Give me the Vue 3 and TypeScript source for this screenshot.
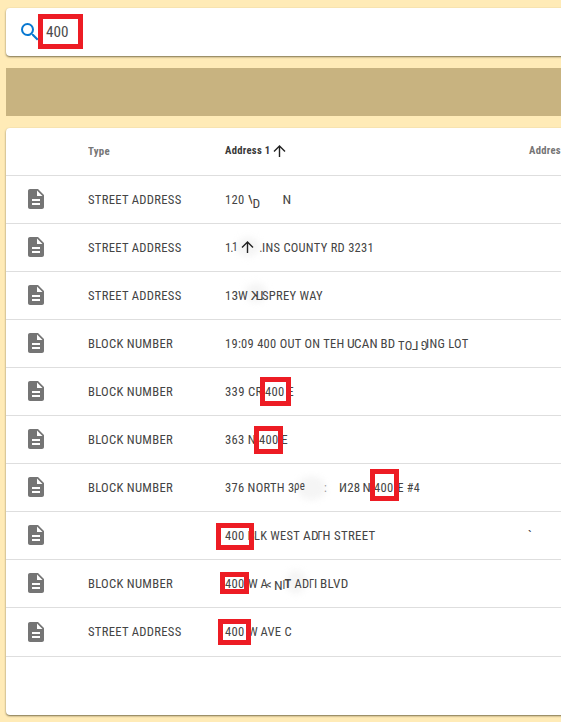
<script setup lang="ts">
interface Piece {
  t?: string
  x: number
  w: number
  dy?: number
  flip?: boolean
  turn?: boolean
  bold?: boolean
  faint?: boolean
  kind?: 'cover' | 'smudge' | 'arrow' | 'box'
  y?: number
  h?: number
}
interface Row {
  type: string
  width: number
  pieces: Piece[]
  note?: string
}

const street = { type: 'STREET ADDRESS', width: 93.5 }
const block = { type: 'BLOCK NUMBER', width: 85 }

const rows: Row[] = [
  { ...street, pieces: [
    { t: '120', x: 225, w: 19.5 }, { t: 'V', x: 248, w: 8.5 },
    { kind: 'cover', x: 252.2, w: 8, y: 12, h: 18 },
    { t: 'D', x: 252.5, w: 8, dy: 4 }, { t: 'N', x: 282.5, w: 9 },
  ] },
  { ...street, pieces: [
    { kind: 'smudge', x: 236, w: 24, y: 13, h: 20 },
    { t: '1', x: 225, w: 6.5 }, { t: '.', x: 230.5, w: 3 }, { t: '1', x: 232, w: 6, dy: -1 },
    { kind: 'arrow', x: 239.5, w: 16, y: 15 },
    { t: '.', x: 259.5, w: 3 }, { t: 'INS COUNTY RD 3231', x: 262, w: 112 },
  ] },
  { ...street, pieces: [
    { kind: 'smudge', x: 245, w: 22, y: 11, h: 20 },
    { t: '1', x: 225, w: 6.5 }, { t: '3', x: 231.5, w: 7 }, { t: 'W', x: 238, w: 10 },
    { t: 'K', x: 250.5, w: 8.5, flip: true }, { t: 'L', x: 257, w: 6.5, flip: true },
    { t: 'SPREY WAY', x: 262, w: 61 },
  ] },
  { ...block, pieces: [
    { t: '19:09 400 OUT ON TEH', x: 225, w: 119.5 }, { t: 'U', x: 347, w: 8 },
    { t: 'CAN', x: 354, w: 24 }, { t: 'BD', x: 380.5, w: 15 },
    { t: 'TO', x: 398, w: 14.5, dy: 2 }, { t: 'L', x: 411.5, w: 7, dy: 2, flip: true },
    { t: 'G', x: 420.5, w: 7, dy: 2, turn: true },
    { kind: 'cover', x: 420, w: 3, y: 14, h: 4 },
    { t: 'ING LOT', x: 426, w: 42.5 },
  ] },
  { ...block, pieces: [
    { t: '339 CR', x: 225, w: 37.5 }, { t: '400', x: 265, w: 19.5 }, { t: 'E', x: 287, w: 7 },
    { kind: 'box', x: 260, w: 31, y: 9, h: 29 },
  ] },
  { ...block, pieces: [
    { t: '363 N', x: 225, w: 31 }, { t: '400', x: 259, w: 19.5 }, { t: 'E', x: 281, w: 7 },
    { kind: 'box', x: 254, w: 29, y: 10, h: 28 },
  ] },
  { ...block, pieces: [
    { kind: 'smudge', x: 297, w: 29, y: 12, h: 24 },
    { t: '376 NORTH 3', x: 225, w: 69.5 }, { t: 'ρe', x: 294, w: 11, dy: -2 },
    { t: ':', x: 324, w: 3, faint: true },
    { t: 'И28', x: 339, w: 21.5 }, { t: 'N', x: 362.5, w: 8.5 },
    { t: '400', x: 374, w: 19.5 }, { t: 'E #4', x: 397.5, w: 22.5 },
    { kind: 'box', x: 370, w: 29, y: 5, h: 32 },
  ] },
  { type: '', width: 0, note: '`', pieces: [
    { t: '400', x: 225, w: 19.5 }, { t: 'B', x: 247.5, w: 7.5 },
    { t: 'LK WEST', x: 254, w: 46 }, { t: 'AD', x: 303, w: 16 }, { t: 'Γ', x: 317.5, w: 5.5 },
    { t: 'H STREET', x: 322.5, w: 53 },
    { kind: 'box', x: 216, w: 38, y: 11, h: 27 },
  ] },
  { ...block, pieces: [
    { kind: 'smudge', x: 286, w: 20, y: 10, h: 24 },
    { t: '400', x: 225, w: 19.5 }, { t: 'W', x: 248, w: 10 }, { t: 'A', x: 260.5, w: 7.5 },
    { t: '<', x: 266, w: 6, dy: 1 }, { t: 'N', x: 274, w: 9, dy: 2 }, { t: 'I', x: 282.5, w: 3, dy: 1 },
    { t: 'T', x: 284.5, w: 7, bold: true }, { t: 'AD', x: 294.5, w: 15 },
    { t: 'Γ', x: 309, w: 5.5 }, { t: 'I', x: 314, w: 3.5 }, { t: 'BLVD', x: 320, w: 28.5 },
    { kind: 'box', x: 220, w: 29, y: 12, h: 22 },
  ] },
  { ...street, pieces: [
    { t: '400', x: 225, w: 19.5 }, { t: 'W', x: 248, w: 10 }, { t: 'AVE C', x: 260.5, w: 31.5 },
    { kind: 'box', x: 218, w: 33, y: 11, h: 26 },
  ] },
]

function place(p: Piece): string {
  const y = 28 + (p.dy ?? 0)
  if (p.flip) return `translate(${p.x + p.w} ${y}) scale(-1 1)`
  if (p.turn) return `translate(${p.x + p.w} ${y - 9}) rotate(180)`
  return `translate(${p.x} ${y})`
}
</script>

<template>
  <div class="page">
    <div class="search">
      <svg class="glass" viewBox="0 0 24 24"><path d="M15.5 14h-.79l-.28-.27A6.47 6.47 0 0 0 16 9.5 6.5 6.5 0 1 0 9.5 16c1.61 0 3.09-.59 4.23-1.57l.27.28v.79l5 4.99L20.490 19l-4.990-5zm-6 0C7.010 14 5 11.990 5 9.500S7.010 5 9.500 5 14 7.010 14 9.500 11.990 14 9.500 14z" /></svg>
      <div class="query">
        <svg width="35" height="25"><text x="3" y="18" textLength="22.5" lengthAdjust="spacingAndGlyphs">400</text></svg>
      </div>
    </div>
    <div class="band"></div>
    <div class="card">
      <div class="row head">
        <span class="icon"></span>
        <svg class="type" width="112" height="47"><text x="0" y="27" textLength="22" lengthAdjust="spacingAndGlyphs">Type</text></svg>
        <svg class="address" viewBox="200 0 361 47" width="361" height="47">
          <text class="sorted" x="225" y="26" textLength="45.5" lengthAdjust="spacingAndGlyphs">Address 1</text>
          <path class="arrow" d="M279.500 29V18M274 23.500l5.500-5.500 5.500 5.500" />
          <text x="529" y="26" textLength="32" lengthAdjust="spacingAndGlyphs">Addres</text>
        </svg>
      </div>
      <div v-for="(row, i) in rows" :key="i" class="row">
        <span class="icon"><svg width="24" height="24" viewBox="0 0 24 24"><path d="M14 2H6c-1.100 0-1.990.9-1.990 2L4 20c0 1.100.89 2 1.990 2H18c1.100 0 2-.9 2-2V8l-6-6zm2 16H8v-2h8v2zm0-4H8v-2h8v2zm-3-5V3.500L18.500 9H13z" /></svg></span>
        <svg class="type" width="112" height="47"><text v-if="row.type" x="0" y="28" :textLength="row.width" lengthAdjust="spacingAndGlyphs">{{ row.type }}</text></svg>
        <svg class="address" viewBox="200 0 361 47" width="361" height="47">
          <template v-for="(p, j) in row.pieces" :key="j">
            <rect v-if="p.kind === 'cover'" class="cover" :x="p.x" :y="p.y" :width="p.w" :height="p.h" />
            <ellipse v-else-if="p.kind === 'smudge'" class="smudge" :cx="p.x + p.w / 2" :cy="p.y! + p.h! / 2" :rx="p.w / 2" :ry="p.h! / 2" />
            <path v-else-if="p.kind === 'arrow'" class="arrow" :transform="`translate(${p.x} ${p.y})`" d="M8 14V3M2.500 8.500L8 3l5.500 5.500" />
            <rect v-else-if="p.kind === 'box'" class="box" :x="p.x + 2.5" :y="p.y! + 2.5" :width="p.w - 5" :height="p.h! - 5" />
            <text v-else :class="{ bold: p.bold, faint: p.faint }" :transform="place(p)" :textLength="p.w" lengthAdjust="spacingAndGlyphs">{{ p.t }}</text>
          </template>
          <text v-if="row.note" x="528" y="28">{{ row.note }}</text>
        </svg>
      </div>
    </div>
  </div>
</template>

<style>
body { margin: 0; background: #ffebb7; overflow: hidden; }
</style>

<style scoped>
.page {
  box-sizing: border-box;
  width: 561px;
  height: 722px;
  padding: 8px 0 0 6px;
  overflow: hidden;
  background: #ffebb7;
  font-family: "Roboto Condensed", Roboto, sans-serif;
  font-stretch: 75%;
}
svg { display: block; flex: none; }
.search {
  display: flex;
  align-items: center;
  box-sizing: border-box;
  width: 570px;
  height: 48px;
  padding-left: 12px;
  background: #fff;
  border-radius: 4px;
  box-shadow: 0 1px 2px rgba(50, 45, 20, .65);
}
.glass { width: 24px; height: 24px; margin-right: -4px; fill: #0878d1; }
.query {
  box-sizing: border-box;
  width: 45px;
  height: 35px;
  border: 5px solid #ed1c24;
  margin-bottom: 1px;
}
.query text { font-size: 15px; fill: #4c4c4c; }
.band { height: 48px; margin-top: 12px; background: #c8b380; }
.card {
  width: 570px;
  height: 587px;
  margin-top: 12px;
  background: #fff;
  border-radius: 4px;
  box-shadow: 0 1px 2px rgba(50, 45, 20, .65);
}
.row {
  display: flex;
  box-sizing: border-box;
  height: 48px;
  border-bottom: 1px solid #dedede;
}
.row:last-child { height: 49px; }
.icon { width: 64px; padding: 11px 0 0 18px; flex: none; fill: #757575; }
.row:last-child .icon { padding-top: 12px; }
.type, .address { font-size: 13px; font-weight: 370; fill: #444; letter-spacing: .3px; }
.address { overflow: hidden; }
.head .type, .head .address { font-size: 11px; font-weight: 700; fill: #757575; }
.head .sorted { fill: #383838; }
.bold { font-weight: 700; }
.faint { fill: #999; }
.arrow { fill: none; stroke: #222; stroke-width: 1.400; }
.cover { fill: #fff; }
.smudge { fill: #f5f5f5; filter: blur(3px); }
.box { fill: none; stroke: #ed1c24; stroke-width: 5; }
</style>
